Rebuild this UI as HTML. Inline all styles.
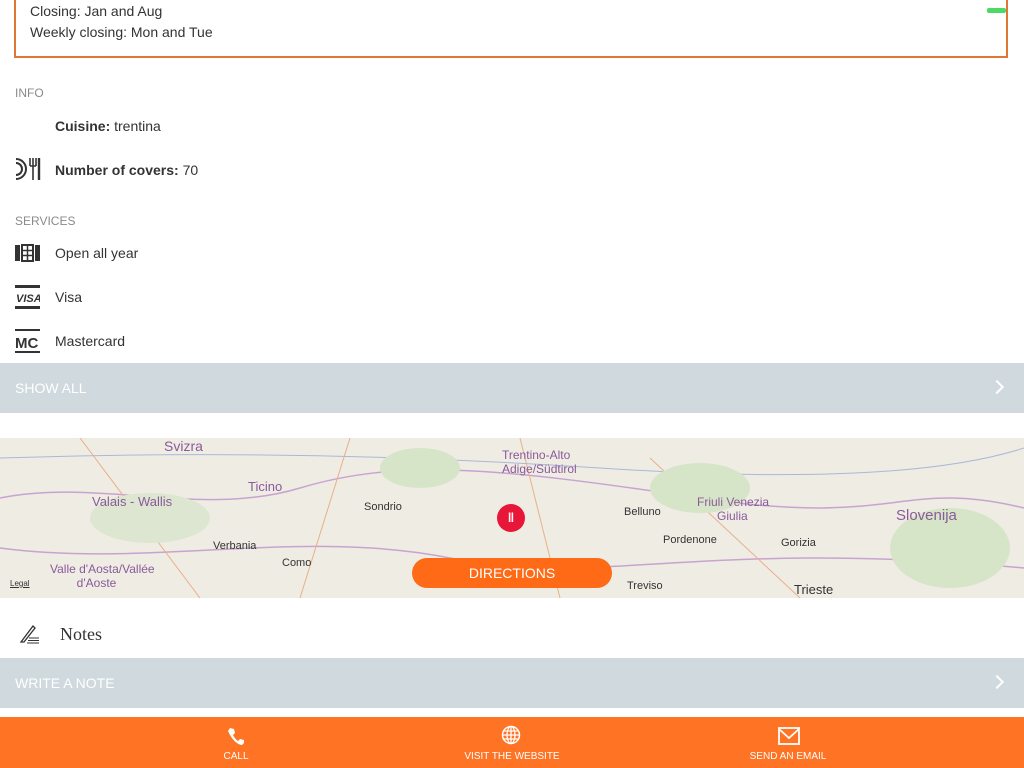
<!DOCTYPE html>
<html><head><style>
body{margin:0;width:1024px;height:768px;overflow:hidden;background:#fff;font-family:"Liberation Sans",sans-serif;position:relative;color:#333}
.a{position:absolute}
.t{font-size:14px;color:#333}
.h{font-size:12px;color:#8a8a8a}
.bar{position:absolute;left:0;width:1024px;height:50px;background:#cfd9de;color:#fff;font-size:14px}
.bar span{position:absolute;left:15px;top:17px}
.bar i{position:absolute;right:22px;top:19px;width:8px;height:8px;border-right:2px solid #fff;border-top:2px solid #fff;transform:rotate(45deg)}
.fb{position:absolute;top:751px;font-size:10px;color:#fff;text-align:center;width:200px}
</style></head><body>
<div class="a" style="left:14px;top:-2px;width:994px;height:60px;border:2px solid #e07634;border-top:none;box-sizing:border-box"></div>
<div class="a" style="left:987px;top:8px;width:19px;height:5px;background:#4cd964;border-radius:2px"></div>
<div class="a t" style="left:30px;top:3px">Closing: Jan and Aug</div>
<div class="a t" style="left:30px;top:24px">Weekly closing: Mon and Tue</div>
<div class="a h" style="left:15px;top:86px">INFO</div>
<div class="a t" style="left:55px;top:118px"><b>Cuisine:</b> trentina</div>
<svg class="a" style="left:14px;top:156px" width="28" height="26" viewBox="0 0 28 26"><path d="M2 3a10 10 0 0 1 0 20M2 7a6 6 0 0 1 0 12" stroke="#333" stroke-width="2" fill="none"/><path d="M16 2v8M19 2v22M22 2v8M16 10h6" stroke="#333" stroke-width="1.6" fill="none"/><path d="M25 2v22" stroke="#333" stroke-width="2.4"/></svg>
<div class="a t" style="left:55px;top:162px"><b>Number of covers:</b> 70</div>
<div class="a h" style="left:15px;top:214px">SERVICES</div>
<svg class="a" style="left:15px;top:244px" width="25" height="18"><rect x="0" y="1" width="5" height="16" fill="#333"/><rect x="20" y="1" width="5" height="16" fill="#333"/><rect x="7" y="1" width="11" height="16" fill="none" stroke="#333" stroke-width="2"/><path d="M12.5 1v16M7 6.5h11M7 11.5h11" stroke="#333" stroke-width="1.5"/></svg>
<div class="a t" style="left:55px;top:245px">Open all year</div>
<svg class="a" style="left:15px;top:285px" width="25" height="25"><rect x="0" y="0" width="25" height="3" fill="#333"/><rect x="0" y="21" width="25" height="3" fill="#333"/><text x="1" y="17" font-size="11" font-weight="bold" font-style="italic" fill="#333" font-family="Liberation Sans">VISA</text></svg>
<div class="a t" style="left:55px;top:289px">Visa</div>
<svg class="a" style="left:15px;top:329px" width="26" height="25"><rect x="0" y="0" width="25" height="2" fill="#333"/><rect x="0" y="22" width="25" height="2" fill="#333"/><text x="0" y="19" font-size="15" font-weight="bold" fill="#333" font-family="Liberation Sans">MC</text></svg>
<div class="a t" style="left:55px;top:333px">Mastercard</div>
<div class="bar" style="top:363px"><span>SHOW ALL</span><i></i></div>
<div class="a" style="left:0;top:438px;width:1024px;height:160px;background:#efece4;overflow:hidden">
<svg width="1024" height="160"><path d="M0 60 C100 40 200 80 300 50 S500 30 700 60 S900 40 1024 70" stroke="#c9a3d0" fill="none" stroke-width="1.5"/><path d="M0 110 C150 130 300 90 450 120 S700 100 1024 130" stroke="#c9a3d0" fill="none" stroke-width="1.5"/><path d="M80 0 L200 160 M520 0 L560 160 M650 20 L800 160 M350 0 L300 160" stroke="#e8b08a" fill="none"/><path d="M0 20 Q300 10 600 30 T1024 10" stroke="#aab8d8" fill="none"/><ellipse cx="150" cy="80" rx="60" ry="25" fill="#dde6d0"/><ellipse cx="700" cy="50" rx="50" ry="25" fill="#d6e5c8"/><ellipse cx="950" cy="110" rx="60" ry="40" fill="#d6e5c8"/><ellipse cx="420" cy="30" rx="40" ry="20" fill="#d6e5c8"/></svg>
<div class="a" style="left:164px;top:0;font-size:14px;color:#8a5a9a">Svizra</div>
<div class="a" style="left:92px;top:56px;font-size:13px;color:#8a5a9a">Valais - Wallis</div>
<div class="a" style="left:248px;top:41px;font-size:13px;color:#8a5a9a">Ticino</div>
<div class="a" style="left:364px;top:63px;font-size:11px;color:#333">Sondrio</div>
<div class="a" style="left:502px;top:10px;font-size:12px;color:#8a5a9a">Trentino-Alto<br>Adige/Südtirol</div>
<div class="a" style="left:624px;top:68px;font-size:11px;color:#333">Belluno</div>
<div class="a" style="left:697px;top:57px;font-size:12px;color:#8a5a9a">Friuli Venezia<br>&nbsp;&nbsp;&nbsp;&nbsp;&nbsp;&nbsp;Giulia</div>
<div class="a" style="left:896px;top:69px;font-size:15px;color:#8a5a9a">Slovenija</div>
<div class="a" style="left:213px;top:102px;font-size:11px;color:#333">Verbania</div>
<div class="a" style="left:663px;top:96px;font-size:11px;color:#333">Pordenone</div>
<div class="a" style="left:781px;top:99px;font-size:11px;color:#333">Gorizia</div>
<div class="a" style="left:50px;top:124px;font-size:12px;color:#8a5a9a">Valle d'Aosta/Vallée<br>&nbsp;&nbsp;&nbsp;&nbsp;&nbsp;&nbsp;&nbsp;&nbsp;d'Aoste</div>
<div class="a" style="left:282px;top:119px;font-size:11px;color:#333">Como</div>
<div class="a" style="left:627px;top:142px;font-size:11px;color:#333">Treviso</div>
<div class="a" style="left:794px;top:144px;font-size:13px;color:#333">Trieste</div>
<div class="a" style="left:10px;top:141px;font-size:8px;color:#333;text-decoration:underline">Legal</div>
<div class="a" style="left:497px;top:66px;width:28px;height:28px;border-radius:50%;background:#e8173a;color:#fff;font-size:13px;text-align:center;line-height:28px;font-weight:bold">‖</div>
<div class="a" style="left:412px;top:120px;width:200px;height:30px;border-radius:15px;background:#fe6a16;color:#fff;font-size:14px;text-align:center;line-height:30px">DIRECTIONS</div>
</div>
<svg class="a" style="left:19px;top:624px" width="22" height="20"><path d="M2 18L14 2l2 2L5 18z" stroke="#333" fill="none" stroke-width="1.3"/><path d="M10 14h10M9 16.5h11M8 19h12" stroke="#333" stroke-width="1"/></svg>
<div class="a" style="left:60px;top:624px;font-size:18px;font-family:'Liberation Serif',serif;color:#333">Notes</div>
<div class="bar" style="top:658px"><span>WRITE A NOTE</span><i></i></div>
<div class="a" style="left:0;top:717px;width:1024px;height:51px;background:#fe7324"></div>
<svg class="a" style="left:226px;top:726px" width="20" height="20"><path d="M4 2l4 1 1 4-2 2q2 4 5 6l2-2 4 1 0 3-2 2Q8 18 2 5z" fill="#fff"/></svg>
<svg class="a" style="left:501px;top:725px" width="20" height="20"><circle cx="10" cy="10" r="8.5" stroke="#fff" fill="none" stroke-width="1.5"/><ellipse cx="10" cy="10" rx="4" ry="8.5" stroke="#fff" fill="none" stroke-width="1.3"/><path d="M1.5 10h17M3 6h14M3 14h14M10 1.5v17" stroke="#fff" stroke-width="1.3"/></svg>
<svg class="a" style="left:778px;top:727px" width="22" height="18"><rect x="1" y="1" width="20" height="16" stroke="#fff" fill="none" stroke-width="1.8"/><path d="M1 2l10 9 10-9" stroke="#fff" fill="none" stroke-width="1.8"/></svg>
<div class="fb" style="left:136px">CALL</div>
<div class="fb" style="left:412px">VISIT THE WEBSITE</div>
<div class="fb" style="left:688px">SEND AN EMAIL</div>
</body></html>
